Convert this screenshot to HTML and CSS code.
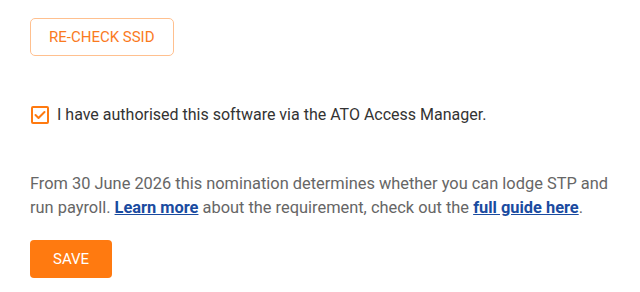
FILE: index.html
```html
<!DOCTYPE html>
<html>
<head>
<meta charset="utf-8">
<link rel="stylesheet" href="styles.css">
</head>
<body>
<div class="page">
  <button class="btn-outline">RE-CHECK SSID</button>
  <label class="check-row">
    <span class="checkbox">
      <svg width="12" height="10" viewBox="0 0 12 10"><path d="M1.5 5 L4.5 8 L10.5 2" fill="none" stroke="#ff7a10" stroke-width="2" stroke-linecap="round" stroke-linejoin="round"/></svg>
    </span>
    <span class="check-label">I have authorised this software via the ATO Access Manager.</span>
  </label>
  <p class="info">From 30 June 2026 this nomination determines whether you can lodge STP and run payroll. <a href="#">Learn more</a> about the requirement, check out the <a href="#">full guide here</a>.</p>
  <button class="btn-primary">SAVE</button>
</div>
</body>
</html>
```
FILE: styles.css
```css
* { box-sizing: border-box; }
html, body { margin: 0; padding: 0; background: #fff; }
body { font-family: Roboto, "Noto Sans", sans-serif; }
.page {
  padding: 18px 30px 0 30px;
  display: flex;
  flex-direction: column;
  align-items: flex-start;
}
.btn-outline {
  height: 38px;
  padding: 0 18px;
  border: 1px solid #ffc08f;
  border-radius: 5px;
  background: #fff;
  color: #fa7a1e;
  font-family: Roboto, sans-serif;
  font-size: 15px;
}
.check-row {
  margin-top: 49px;
  display: flex;
  align-items: center;
  gap: 8px;
  margin-left: 1px;
}
.checkbox {
  width: 18px;
  height: 18px;
  border: 2px solid #ff7a10;
  border-radius: 2px;
  display: flex;
  align-items: center;
  justify-content: center;
}
.check-label {
  font-size: 16px;
  color: #333;
}
.info {
  margin: 48px 0 0 0;
  font-size: 16.4px;
  line-height: 24px;
  color: #666;
}
.info a {
  color: #1a4ba0;
  font-weight: bold;
  text-decoration: underline;
}
.btn-primary {
  margin-top: 20px;
  height: 38px;
  padding: 0 23px;
  border: none;
  border-radius: 4px;
  background: #ff7a10;
  color: #fff;
  font-family: Roboto, sans-serif;
  font-size: 15px;
}
```
